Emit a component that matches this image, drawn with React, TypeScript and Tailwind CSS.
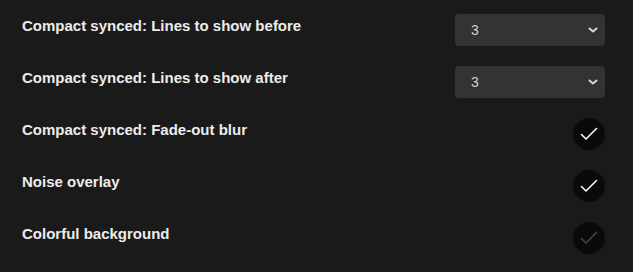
import React from "react";

type Row =
    | { kind: "select"; label: string; value: string }
    | { kind: "toggle"; label: string; on: boolean };

const rows: Row[] = [
    { kind: "select", label: "Compact synced: Lines to show before", value: "3" },
    { kind: "select", label: "Compact synced: Lines to show after", value: "3" },
    { kind: "toggle", label: "Compact synced: Fade-out blur", on: true },
    { kind: "toggle", label: "Noise overlay", on: true },
    { kind: "toggle", label: "Colorful background", on: false },
];

const SelectBox = ({ value }: { value: string }) => (
    <div className="flex h-8 w-[150px] items-center justify-between rounded bg-[#333333] pl-4 pr-[5px]">
        <span className="text-[14px] text-[#d2d2d2]">{value}</span>
        <svg width="14" height="14" viewBox="0 0 14 14" fill="none">
            <path d="M3.5 5.5 L7 8.5 L10.5 5.5" stroke="#d6d6d6" strokeWidth="2" strokeLinecap="round" strokeLinejoin="round" />
        </svg>
    </div>
);

const CheckCircle = ({ on }: { on: boolean }) => (
    <div className="flex h-8 w-8 items-center justify-center rounded-full bg-[#0a0a0a]">
        <svg width="18" height="14" viewBox="0 0 18 14" fill="none">
            <path
                d="M1.5 7.5 L6 12 L16.5 1.5"
                stroke={on ? "#ffffff" : "#474747"}
                strokeWidth="1.5"
                strokeLinecap="round"
                strokeLinejoin="round"
            />
        </svg>
    </div>
);

export default function App() {
    return (
        <div
            className="min-h-[272px] w-full bg-[#1a1a1a] pl-[22px] pr-[28px] pt-1"
            style={{ fontFamily: '"Liberation Sans", Arial, sans-serif' }}
        >
            {rows.map((row) => (
                <div key={row.label} className="flex h-[52px] items-center justify-between">
                    <span className="pb-[7px] text-[15px] font-semibold text-[#ececec]">{row.label}</span>
                    {row.kind === "select" ? <SelectBox value={row.value} /> : <CheckCircle on={row.on} />}
                </div>
            ))}
        </div>
    );
}
